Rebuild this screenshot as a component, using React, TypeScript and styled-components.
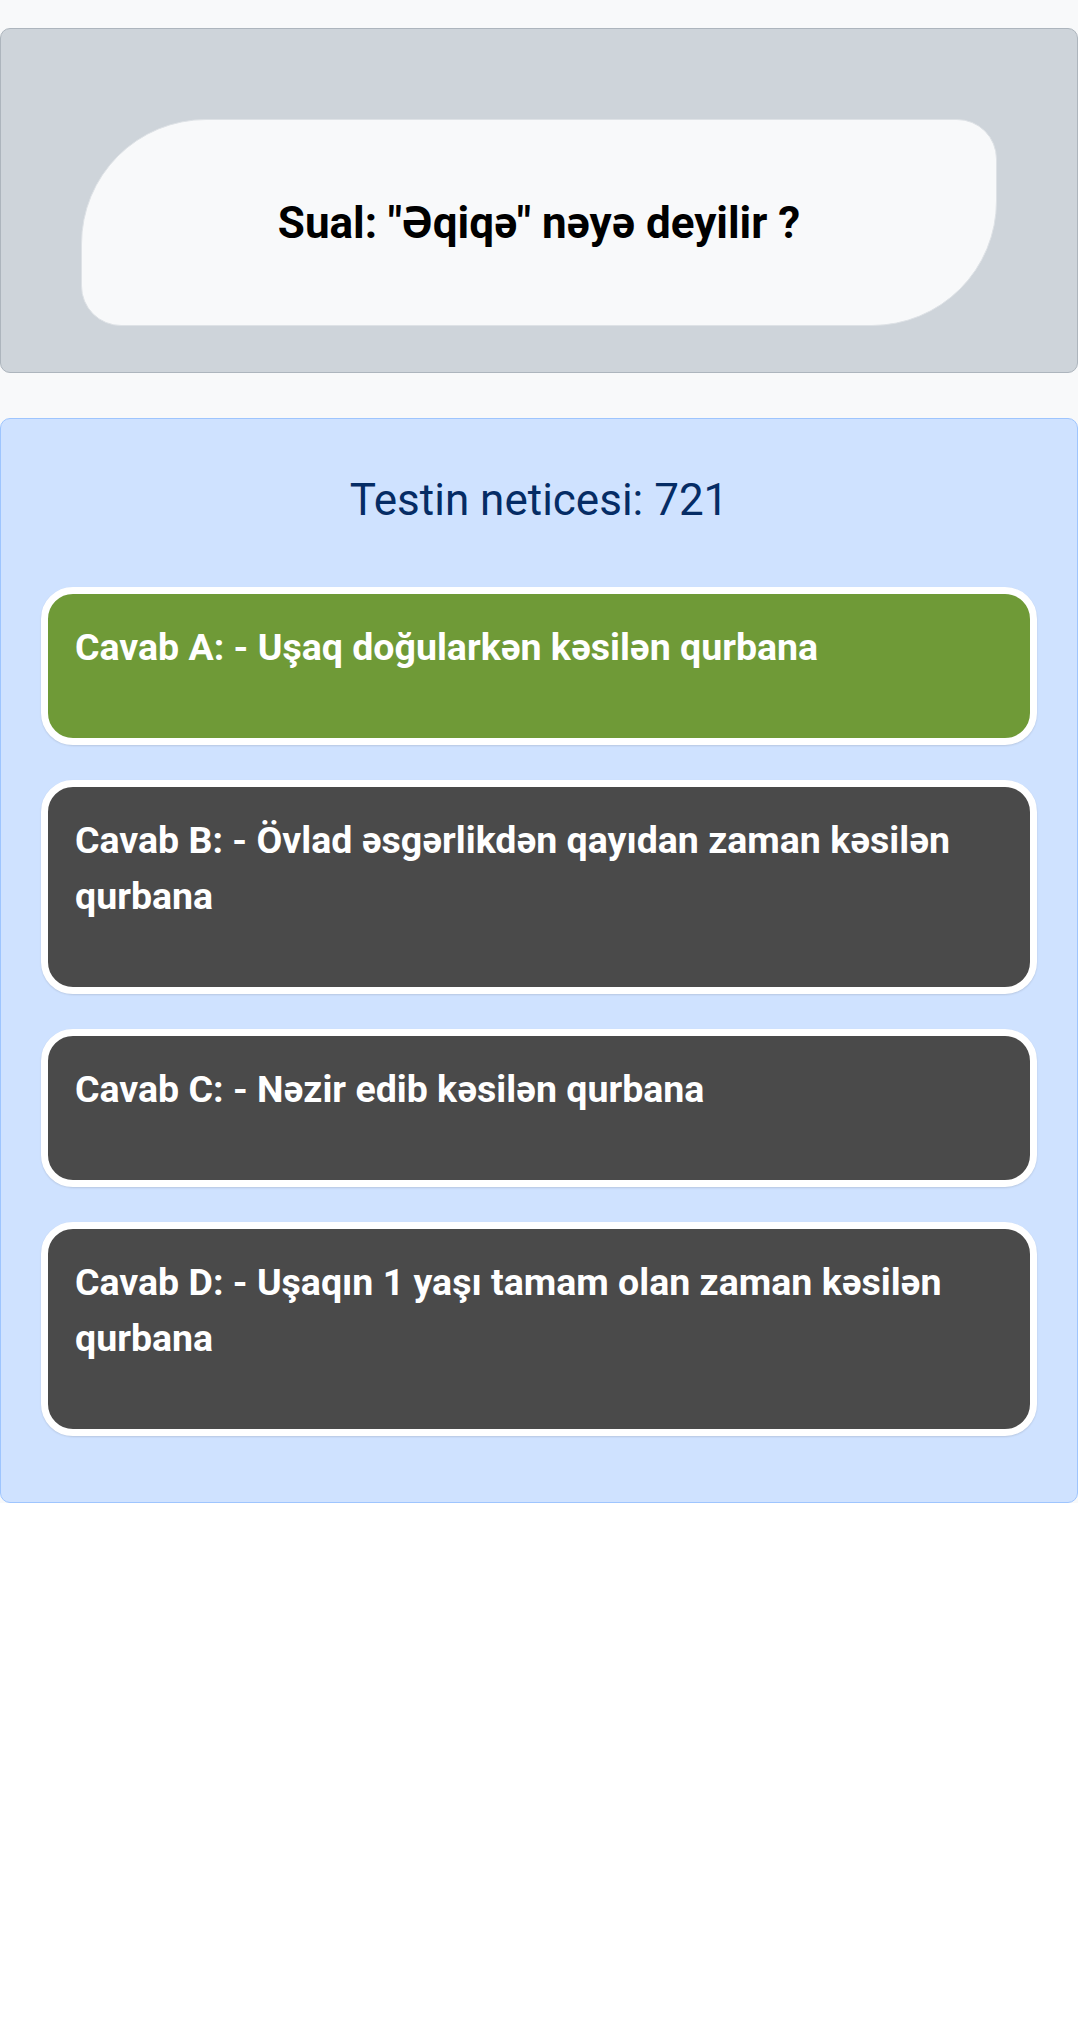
import React from 'react'
import styled, { createGlobalStyle } from 'styled-components'

const GlobalStyle = createGlobalStyle`
  body {
    margin: 0;
    background: #fff;
    font-family: Roboto, "Liberation Sans", Arial, sans-serif;
  }
`

const Page = styled.div`
  background-color: #f8f9fa;
  padding-top: 28px;
`

const QuestionPanel = styled.section`
  background-color: #ced4da;
  border: 1px solid #adb5bd;
  border-radius: 10px;
  padding: 90px 80px 46px;
`

const Bubble = styled.div`
  display: flex;
  align-items: center;
  justify-content: center;
  height: 207px;
  box-sizing: border-box;
  background-color: #f8f9fa;
  border: 1px solid #dee2e6;
  border-radius: 125px 40px 125px 40px;
`

const QuestionText = styled.h2`
  margin: 0;
  font-size: 44px;
  font-weight: 700;
  color: #000;
`

const ResultPanel = styled.section`
  margin-top: 45px;
  background-color: #cfe2ff;
  border: 1px solid #9ec5fe;
  border-radius: 10px;
  padding: 55px 40px 66px;
  display: flex;
  flex-direction: column;
`

const Score = styled.h3`
  margin: 0 0 60px;
  text-align: center;
  font-size: 44px;
  font-weight: 400;
  line-height: 1.2;
  color: #052c65;
`

const Answers = styled.div`
  display: flex;
  flex-direction: column;
  gap: 35px;
`

type AnswerProps = {
  correct?: boolean;
}

const Answer = styled.div<AnswerProps>`
  background-color: ${({ correct }) => (correct ? '#6f9a37' : '#4a4a4a')};
  border: 7px solid #fff;
  border-radius: 32px;
  box-shadow: 0 1px 2px rgba(0, 0, 0, 0.12);
  padding: 25px 26px 63px 27px;
  color: #fff;
  font-size: 37.5px;
  font-weight: 700;
  line-height: 56px;
`

const answers = [
  { key: 'A', text: 'Uşaq doğularkən kəsilən qurbana', correct: true },
  { key: 'B', text: 'Övlad əsgərlikdən qayıdan zaman kəsilən qurbana' },
  { key: 'C', text: 'Nəzir edib kəsilən qurbana' },
  { key: 'D', text: 'Uşaqın 1 yaşı tamam olan zaman kəsilən qurbana' },
]

function App () {
  return (
    <>
      <GlobalStyle />
      <Page>
        <QuestionPanel>
          <Bubble>
            <QuestionText>Sual: "Əqiqə" nəyə deyilir ?</QuestionText>
          </Bubble>
        </QuestionPanel>
        <ResultPanel>
          <Score>Testin neticesi: 721</Score>
          <Answers>
            {answers.map((answer) => (
              <Answer key={answer.key} correct={answer.correct}>
                Cavab {answer.key}: - {answer.text}
              </Answer>
            ))}
          </Answers>
        </ResultPanel>
      </Page>
    </>
  )
}

export default App
